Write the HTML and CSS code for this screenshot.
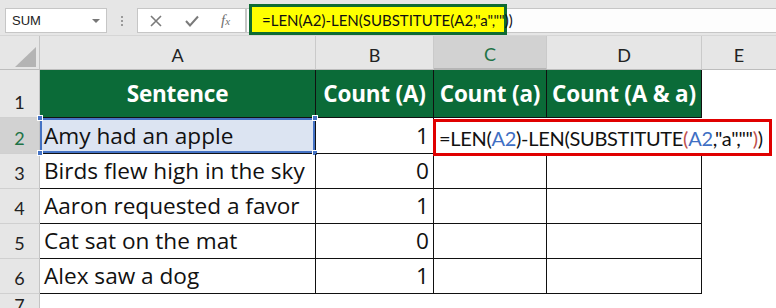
FILE: index.html
```html
<!DOCTYPE html>
<html>
<head>
<meta charset="utf-8">
<link rel="stylesheet" href="styles.css">
</head>
<body>
<div class="app">
  <div class="toolbar">
    <div class="namebox"><span class="nb-text">SUM</span><span class="nb-arrow"></span></div>
    <div class="dots"><i></i><i></i><i></i></div>
    <div class="fxbox">
      <svg class="ic" width="14" height="14" viewBox="0 0 14 14"><path d="M2 2 L12 12 M12 2 L2 12" stroke="#7a7a7a" stroke-width="1.6" fill="none"/></svg>
      <svg class="ic" width="16" height="14" viewBox="0 0 16 14"><path d="M2 7 L6 11.5 L14 2.5" stroke="#7a7a7a" stroke-width="2" fill="none"/></svg>
      <span class="fx">f<span class="fx-x">x</span></span>
    </div>
    <div class="formula">
      <div class="fbox">=LEN(A2)-LEN(SUBSTITUTE(A2,"a",""))</div>
    </div>
  </div>
  <div class="sheet">
    <div class="corner"><span class="tri"></span></div>
    <div class="colh">A</div>
    <div class="colh">B</div>
    <div class="colh active">C</div>
    <div class="colh">D</div>
    <div class="colh last">E</div>

    <div class="rowh">1</div>
    <div class="cell head">Sentence</div>
    <div class="cell head">Count (A)</div>
    <div class="cell head">Count (a)</div>
    <div class="cell head">Count (A &amp; a)</div>
    <div class="blank"></div>

    <div class="rowh active">2</div>
    <div class="cell sel">Amy had an apple<i class="h h1"></i><i class="h h2"></i><i class="h h3"></i><i class="h h4"></i></div>
    <div class="cell num">1</div>
    <div class="edit">=LEN(<span class="ref">A2</span>)-LEN(SUBSTITUTE<span class="par">(</span><span class="ref">A2</span>,"a",""<span class="par">)</span>)</div>

    <div class="rowh">3</div>
    <div class="cell">Birds flew high in the sky</div>
    <div class="cell num">0</div>
    <div class="cell"></div>
    <div class="cell"></div>
    <div class="blank"></div>

    <div class="rowh">4</div>
    <div class="cell">Aaron requested a favor</div>
    <div class="cell num">1</div>
    <div class="cell"></div>
    <div class="cell"></div>
    <div class="blank"></div>

    <div class="rowh">5</div>
    <div class="cell">Cat sat on the mat</div>
    <div class="cell num">0</div>
    <div class="cell"></div>
    <div class="cell"></div>
    <div class="blank"></div>

    <div class="rowh">6</div>
    <div class="cell">Alex saw a dog</div>
    <div class="cell num">1</div>
    <div class="cell"></div>
    <div class="cell"></div>
    <div class="blank"></div>

    <div class="rowh">7</div>
    <div class="blank"></div>
    <div class="blank"></div>
    <div class="blank"></div>
    <div class="blank"></div>
    <div class="blank"></div>
  </div>
</div>
</body>
</html>
```
FILE: styles.css
```css
* { box-sizing: border-box; }
html, body { margin: 0; padding: 0; }
body { width: 776px; height: 308px; overflow: hidden; background: #fff; font-family: "Open Sans", Lato, sans-serif; }
.app { width: 776px; height: 308px; display: flex; flex-direction: column; }

.toolbar { height: 36px; flex: none; display: flex; align-items: flex-start; padding-top: 8px; background: #e6e6e6; border-bottom: 1px solid #d6d6d6; }
.namebox { margin-left: 5px; width: 102px; height: 25px; background: #fff; border: 1px solid #c6c6c6; display: flex; align-items: center; justify-content: space-between; padding: 0 6px 0 6px; }
.nb-text { font-family: "Liberation Sans", Arial, sans-serif; font-size: 13px; color: #222; }
.nb-arrow { width: 0; height: 0; border-left: 4px solid transparent; border-right: 4px solid transparent; border-top: 4px solid #777; }
.dots { width: 30px; height: 25px; display: flex; flex-direction: column; align-items: center; justify-content: center; gap: 2px; }
.dots i { display: block; width: 2px; height: 2px; background: #9a9a9a; }
.fxbox { width: 109px; height: 25px; background: #fff; border: 1px solid #c6c6c6; display: flex; align-items: center; gap: 21px; padding-left: 11px; }
.fx { font-family: "Liberation Serif", serif; font-style: italic; font-size: 15px; color: #6f6f6f; }
.fx-x { font-size: 11px; }
.formula { flex: 1; height: 25px; background: #fdfdfd; border-top: 1px solid #c6c6c6; border-bottom: 1px solid #c6c6c6; border-left: 1px solid #c6c6c6; padding-left: 2px; }
.fbox { width: 258px; height: 31px; margin-top: -5px; background: #ffff00; border: 3px solid #0f6b33; font-family: Lato, sans-serif; font-size: 15px; color: #111; padding-left: 10px; display: flex; align-items: center; white-space: nowrap; }

.sheet { flex: 1; display: grid; grid-template-columns: 40px 276px 118px 113px 155px 1fr; grid-template-rows: 34px 48px 36px 35px 35px 35px 35px 1fr; }
.corner { background: #e6e6e6; border-right: 1px solid #c4c4c4; border-bottom: 1px solid #bdbdbd; position: relative; }
.tri { position: absolute; left: 15px; top: 11px; width: 0; height: 0; border-left: 21px solid transparent; border-bottom: 20px solid #b4b4b4; }
.colh { background: #e6e6e6; border-right: 1px solid #cacaca; border-bottom: 1px solid #bdbdbd; display: flex; justify-content: center; align-items: flex-end; padding-bottom: 3px; font-family: Lato, sans-serif; font-size: 18px; color: #222; }
.colh.active { background: #d2d2d2; color: #217346; border-bottom: 2px solid #b5b5b5; }
.colh.last { border-right: none; }
.rowh { background: #e6e6e6; border-right: 1px solid #c4c4c4; border-bottom: 1px solid #d0d0d0; display: flex; justify-content: center; align-items: flex-end; padding-bottom: 4px; font-family: Lato, sans-serif; font-size: 18px; color: #222; }
.rowh.active { background: #d2d2d2; color: #217346; }

.cell { border-right: 1px solid #111; border-bottom: 1px solid #111; display: flex; align-items: flex-end; padding: 0 4px 2px 4px; font-size: 22.6px; color: #111; white-space: nowrap; position: relative; }
.cell.head { background: #0b6b38; color: #fff; font-weight: 700; font-size: 22.5px; justify-content: center; align-items: center; padding: 0; letter-spacing: -0.2px; }
.cell.num { justify-content: flex-end; }
.cell.sel { background: #dce4f2; box-shadow: inset 0 0 0 2px #4472c4; }
.h { position: absolute; width: 6px; height: 6px; background: #4472c4; border: 1px solid #fff; }
.h1 { left: -3px; top: -3px; }
.h2 { right: -3px; top: -3px; }
.h3 { left: -3px; bottom: -3px; }
.h4 { right: -3px; bottom: -3px; }
.blank { background: #fff; }

.edit { grid-column: 4 / 7; grid-row: 3; margin: 1px 4px -2px -1px; z-index: 2; background: #fff; border: 3px solid #e00000; font-family: Lato, sans-serif; font-size: 20px; color: #111; display: flex; align-items: center; padding-left: 3px; white-space: nowrap; letter-spacing: -0.3px; overflow: hidden; }
.ref { color: #3f6fc4; }
.par { color: #c0504d; }
```
